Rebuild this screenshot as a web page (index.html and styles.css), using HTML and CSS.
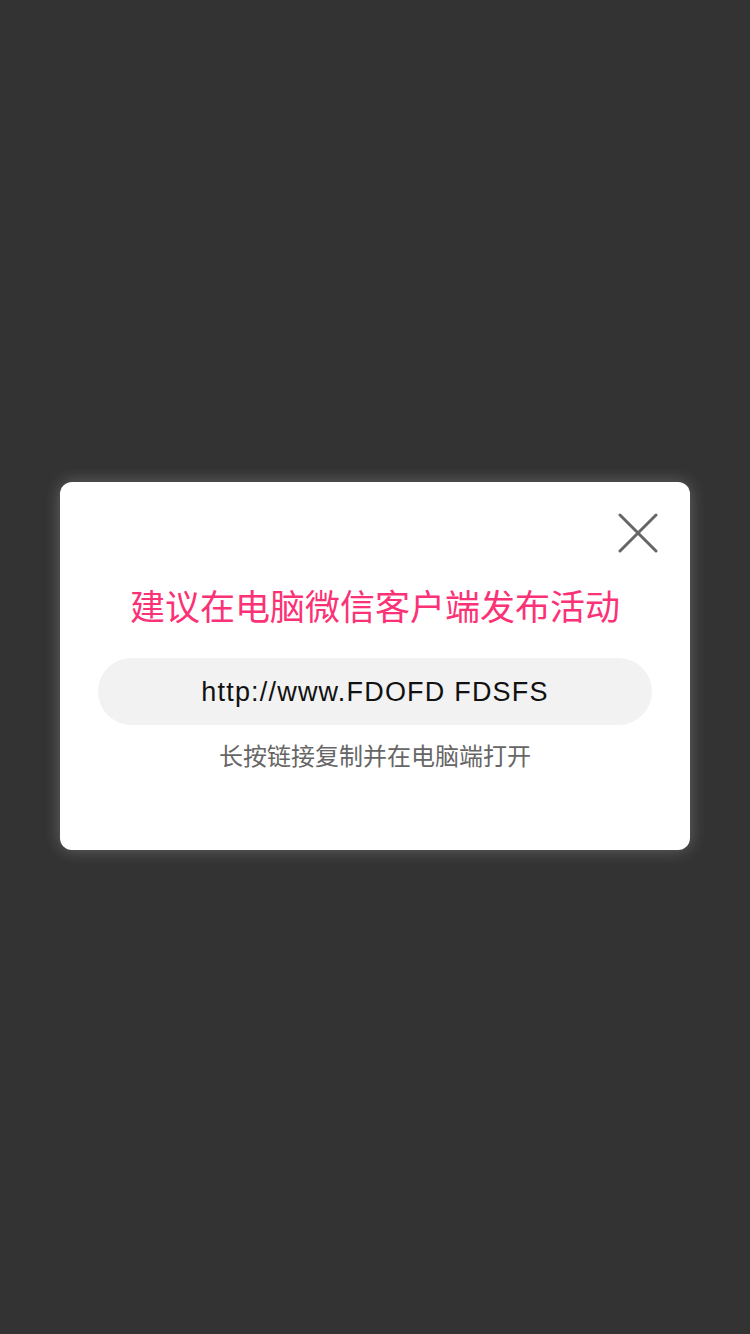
FILE: index.html
```html
<!DOCTYPE html>
<html lang="zh-CN">
<head>
<meta charset="utf-8">
<link rel="stylesheet" href="styles.css">
<title>提示</title>
</head>
<body>
<div class="mask">
  <div class="modal">
    <button class="close" aria-label="关闭">
      <svg width="40" height="40" viewBox="0 0 40 40"><path d="M2 2 L38 38 M38 2 L2 38" stroke="#666" stroke-width="3" stroke-linecap="round" fill="none"/></svg>
    </button>
    <h1 class="title">建议在电脑微信客户端发布活动</h1>
    <div class="link">http://www.FDOFD FDSFS</div>
    <p class="hint">长按链接复制并在电脑端打开</p>
  </div>
</div>
</body>
</html>
```
FILE: styles.css
```css
* { box-sizing: border-box; }
html, body { margin: 0; padding: 0; }
body {
  background: #333333;
  font-family: "Liberation Sans", "Noto Sans CJK SC", sans-serif;
}
.mask {
  height: 1334px;
  display: flex;
  align-items: center;
  justify-content: center;
  padding-bottom: 2px;
}
.modal {
  position: relative;
  width: 630px;
  background: #ffffff;
  border-radius: 12px;
  box-shadow: 0 0 16px rgba(255, 255, 255, 0.25);
  padding: 98px 38px 78px;
  display: flex;
  flex-direction: column;
  align-items: center;
}
.close {
  position: absolute;
  top: 31px;
  right: 32px;
  width: 40px;
  height: 40px;
  padding: 0;
  border: 0;
  background: none;
}
.close svg { display: block; }
.title {
  margin: 0;
  font-family: "Noto Sans CJK SC", sans-serif;
  font-weight: 400;
  font-size: 35px;
  line-height: 50px;
  color: #fb3276;
  white-space: nowrap;
}
.link {
  margin-top: 28px;
  width: 554px;
  height: 67px;
  border-radius: 34px;
  background: #f2f2f2;
  display: flex;
  align-items: center;
  justify-content: center;
  padding-top: 2px;
  font-size: 27px;
  letter-spacing: 1.2px;
  color: #111;
}
.hint {
  margin: 13px 0 0;
  font-family: "Noto Sans CJK SC", sans-serif;
  font-size: 24px;
  line-height: 34px;
  color: #666;
}
```
